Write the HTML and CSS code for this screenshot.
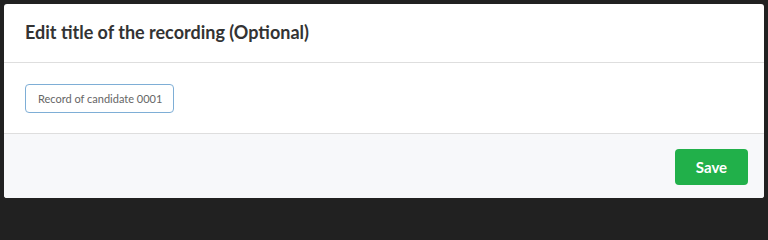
FILE: index.html
```html
<!DOCTYPE html>
<html lang="en">
<head>
<meta charset="utf-8">
<title>Edit title</title>
<link rel="stylesheet" href="styles.css">
</head>
<body>
<div class="modal">
  <div class="modal-header">
    <h2 class="modal-title">Edit title of the recording (Optional)</h2>
  </div>
  <div class="modal-body">
    <input class="title-input" type="text" value="Record of candidate 0001">
  </div>
  <div class="modal-footer">
    <button class="btn-save" type="button">Save</button>
  </div>
</div>
</body>
</html>
```
FILE: styles.css
```css
html, body {
  margin: 0;
}
html {
  background: #212121;
}
body {
  background: #212121;
  padding: 4px;
  font-family: Lato, "Noto Sans", sans-serif;
}
.modal {
  width: 760px;
  height: 194px;
  background: #fff;
  border-radius: 3px;
  display: flex;
  flex-direction: column;
  overflow: hidden;
}
.modal-header {
  box-sizing: border-box;
  border-bottom: 1px solid #dedede;
  display: flex;
  align-items: center;
  padding: 0 21px;
  flex: 0 0 auto;
  height: 59px;
}
.modal-title {
  margin: 0;
  font-size: 18px;
  font-weight: 700;
  color: #333;
  padding-bottom: 2px;
}
.modal-body {
  padding: 21px 21px 20px;
  border-bottom: 1px solid #dedede;
  flex: 0 0 auto;
}
.title-input {
  display: block;
  width: 149px;
  height: 29px;
  box-sizing: border-box;
  border: 1px solid #7eaed6;
  border-radius: 4px;
  padding: 0 0 0 12px;
  font-family: Lato, "Noto Sans", sans-serif;
  font-size: 11px;
  color: #666;
  background: #fff;
  outline: none;
}
.modal-footer {
  flex: 1 1 auto;
  background: #f7f8fa;
  display: flex;
  justify-content: flex-end;
  align-items: flex-start;
  padding: 15px 16px 0 0;
}
.btn-save {
  width: 73px;
  height: 36px;
  border: none;
  border-radius: 4px;
  background: #21b04a;
  color: #fff;
  font-family: Lato, "Noto Sans", sans-serif;
  font-weight: 700;
  font-size: 15px;
  padding: 0;
  cursor: pointer;
}
```
